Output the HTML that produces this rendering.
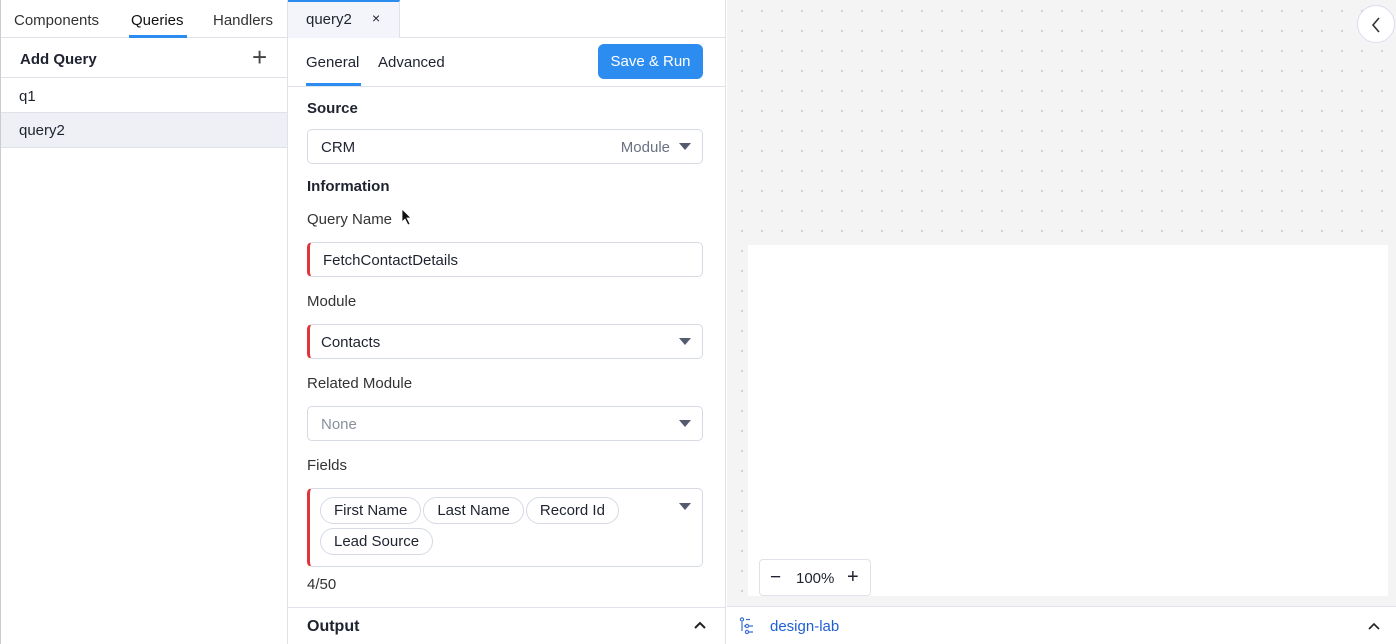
<!DOCTYPE html>
<html><head><style>
*{box-sizing:border-box;margin:0;padding:0}
body{width:1396px;height:644px;overflow:hidden;font-family:"Liberation Sans",sans-serif;color:#1f2330;background:#fff;position:relative;font-size:15px}
.abs{position:absolute}
.left{left:0;top:0;width:288px;height:644px;border-right:1px solid #dfe2e8;border-left:1px solid #ccc}
.tabs{height:38px;border-bottom:1px solid #dfe2e8;position:relative}
.tabs span{position:absolute;top:12px;font-size:15px;color:#333}
.mid{left:288px;top:0;width:438px;height:644px;border-right:1px solid #dfe2e8}
.lbl{position:absolute;left:19px;font-size:15px;color:#333}
.b{font-weight:bold;color:#1f2330}
.inp{position:absolute;left:19px;width:396px;height:35px;border:1px solid #d5dae3;border-radius:5px;font-size:15px;padding:9px 13px;color:#1f2330}
.req{border-left:3px solid #e0353b}
.arr{position:absolute;right:11px;top:13px;width:0;height:0;border-left:6px solid transparent;border-right:6px solid transparent;border-top:7px solid #555b6e}
.chip{display:inline-block;border:1px solid #d5dae3;border-radius:14px;padding:4px 13px;font-size:15px;margin-right:2px;margin-bottom:4px}
.canvas{left:727px;top:0;width:669px;height:606px;background-color:#f4f4f5;background-image:radial-gradient(circle,#cfcfd3 1px,transparent 1.3px);background-size:20px 20px;background-position:5px 1px}
</style></head><body>
<div class="abs left">
 <div class="tabs"><span style="left:13px">Components</span><span style="left:130px;color:#111">Queries</span><span style="left:212px">Handlers</span>
 <div class="abs" style="left:128px;top:35px;width:58px;height:3px;background:#2d8cf0"></div></div>
 <div style="height:40px;border-bottom:1px solid #dfe2e8;position:relative"><span class="abs b" style="left:19px;top:13px;font-size:15px">Add Query</span><span class="abs" style="left:251px;top:4px;font-size:26px;font-weight:300;color:#444">+</span></div>
 <div style="height:35px;border-bottom:1px solid #dfe2e8;padding:10px 18px">q1</div>
 <div style="height:35px;border-bottom:1px solid #dfe2e8;padding:9px 18px;background:#eef0f5">query2</div>
</div>
<div class="abs mid">
 <div style="height:38px;border-bottom:1px solid #dfe2e8;position:relative;background:#fff">
  <div class="abs" style="left:0;top:0;width:112px;height:38px;background:#f3f5fa;border-top:2px solid #2d8cf0;border-right:1px solid #dfe2e8"></div>
  <span class="abs" style="left:18px;top:11px">query2</span><span class="abs" style="left:84px;top:10px;font-size:14px">×</span></div>
 <div style="height:49px;border-bottom:1px solid #dfe2e8;position:relative">
  <span class="abs" style="left:18px;top:16px">General</span><span class="abs" style="left:90px;top:16px">Advanced</span>
  <div class="abs" style="left:18px;top:45px;width:55px;height:3px;background:#2d8cf0"></div>
  <div class="abs" style="left:310px;top:6px;width:105px;height:35px;background:#2d8cf0;border-radius:6px;color:#fff;text-align:center;line-height:35px">Save &amp; Run</div></div>
 <div class="lbl b" style="top:100px">Source</div>
 <div class="inp" style="top:129px">CRM<span class="abs" style="right:32px;top:9px;color:#6b7183">Module</span><div class="arr"></div></div>
 <div class="lbl b" style="top:178px">Information</div>
 <div class="lbl" style="top:211px">Query Name</div>
 <div class="inp req" style="top:242px">FetchContactDetails</div>
 <div class="lbl" style="top:293px">Module</div>
 <div class="inp req" style="top:324px;padding-left:11px">Contacts<div class="arr"></div></div>
 <div class="lbl" style="top:375px">Related Module</div>
 <div class="inp" style="top:406px;color:#8a8f9c">None<div class="arr"></div></div>
 <div class="lbl" style="top:457px">Fields</div>
 <div class="inp req" style="top:488px;height:79px;padding:8px 10px"><span class="chip">First Name</span><span class="chip">Last Name</span><span class="chip">Record Id</span><br><span class="chip">Lead Source</span><div class="arr" style="top:14px"></div></div>
 <div class="lbl" style="top:576px">4/50</div>
 <div class="abs" style="left:0;top:607px;width:438px;height:37px;border-top:1px solid #dfe2e8"><span class="abs b" style="left:19px;top:10px;font-size:16px">Output</span><svg class="abs" style="left:405px;top:12px" width="14" height="10"><path d="M2 8 L7 3 L12 8" stroke="#222" stroke-width="2" fill="none"/></svg></div>
</div>
<div class="abs canvas">
 <div class="abs" style="left:21px;top:245px;width:640px;height:351px;background:#fff"></div>
 <div class="abs" style="left:32px;top:559px;width:112px;height:37px;background:#fff;border:1px solid #dfe2e8;border-radius:4px;font-size:15px"><span class="abs" style="left:10px;top:7px;font-size:19px">−</span><span class="abs" style="left:36px;top:10px">100%</span><span class="abs" style="left:87px;top:6px;font-size:20px">+</span></div>
 <div class="abs" style="left:630px;top:5px;width:38px;height:38px;border-radius:50%;background:#fff;border:1px solid #dde"><svg class="abs" style="left:12px;top:10px" width="12" height="18"><path d="M9 2 L3 9 L9 16" stroke="#333" stroke-width="1.6" fill="none"/></svg></div>
</div>
<div class="abs" style="left:727px;top:606px;width:669px;height:38px;border-top:1px solid #dfe2e8;background:#fff">
 <svg class="abs" style="left:12px;top:10px" width="18" height="20"><g stroke="#3b6fd0" fill="none" stroke-width="1.2"><circle cx="3" cy="2.5" r="1.6"/><path d="M7 2.5h4M3 5v9M5 9h2M10 9h4M10 15h4"/><circle cx="8" cy="9" r="1.6"/><circle cx="8" cy="15" r="1.6"/></g></svg>
 <span class="abs" style="left:43px;top:11px;color:#1f5fd6">design-lab</span>
 <svg class="abs" style="left:640px;top:14px" width="14" height="10"><path d="M2 8 L7 3 L12 8" stroke="#222" stroke-width="1.6" fill="none"/></svg>
</div>
<svg class="abs" style="left:401px;top:208px" width="12" height="18"><path d="M1 1 L1 14 L4 11 L7 17 L9 16 L6 10 L10 10 Z" fill="#111" stroke="#fff" stroke-width="0.8"/></svg>
</body></html>
